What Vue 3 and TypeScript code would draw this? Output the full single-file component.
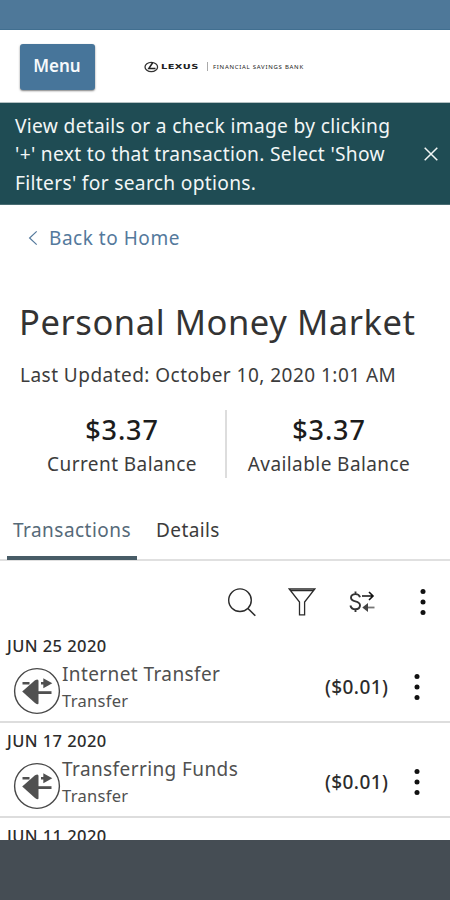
<script setup lang="ts">
interface Transaction {
  date: string
  title: string
  category: string
  amount: string
}

const transactions: Transaction[] = [
  { date: 'JUN 25 2020', title: 'Internet Transfer', category: 'Transfer', amount: '($0.01)' },
  { date: 'JUN 17 2020', title: 'Transferring Funds', category: 'Transfer', amount: '($0.01)' },
]

const balances = [
  { amount: '$3.37', label: 'Current Balance' },
  { amount: '$3.37', label: 'Available Balance' },
]
</script>

<template>
  <div class="screen">
    <div class="status-bar"></div>
    <header class="header">
      <button class="menu-btn">Menu</button>
      <div class="brand">
        <svg class="brand-mark" viewBox="0 0 15 12" width="15" height="12">
          <ellipse cx="7.3" cy="6" rx="6.3" ry="4.7" fill="none" stroke="#333" stroke-width="1.3" />
          <path d="M8.8 1.5 L4.8 7.6 H11.5" fill="none" stroke="#222" stroke-width="1.5" />
        </svg>
        <span class="brand-name">LEXUS</span>
        <span class="brand-rule"></span>
        <span class="brand-bank">FINANCIAL SAVINGS BANK</span>
      </div>
    </header>

    <section class="notice">
      <p class="notice-text">
        <span>View details or a check image by clicking</span><br />
        <span>'+' next to that transaction. Select 'Show</span><br />
        <span>Filters' for search options.</span>
      </p>
      <svg class="close" viewBox="0 0 16 16" width="16" height="16">
        <path d="M1.7 1.7 L14.3 14.3 M14.3 1.7 L1.7 14.3" stroke="#f2f6f6" stroke-width="1.5" />
      </svg>
    </section>

    <a class="back">
      <svg viewBox="0 0 10 16" width="10" height="16">
        <path d="M8.7 1.4 L1.6 8 L8.7 14.6" fill="none" stroke="#54799c" stroke-width="1.2" />
      </svg>
      <span>Back to Home</span>
    </a>

    <h1 class="title">Personal Money Market</h1>
    <p class="updated">Last Updated: October 10, 2020 1:01 AM</p>

    <section class="balances">
      <div v-for="b in balances" :key="b.label" class="balance">
        <span class="balance-amount">{{ b.amount }}</span>
        <span class="balance-label">{{ b.label }}</span>
      </div>
    </section>

    <nav class="tabs">
      <a class="tab active">Transactions</a>
      <a class="tab details">Details</a>
    </nav>

    <div class="toolbar">
      <svg class="tool search" viewBox="0 0 30 30" width="30" height="30">
        <circle cx="13" cy="13.2" r="11.3" fill="none" stroke="#2b2b2b" stroke-width="1.4" />
        <path d="M20.7 21.2 L28.3 28.7" stroke="#2b2b2b" stroke-width="1.6" />
      </svg>
      <svg class="tool filter" viewBox="0 0 28 28" width="28" height="28">
        <path d="M1.2 1 H26.8 L16.6 14 V26.8 H11.5 V14 Z M2 2.6 H26" fill="none" stroke="#2b2b2b" stroke-width="1.3" />
      </svg>
      <svg class="tool exchange" viewBox="0 0 26 22" width="26" height="22">
        <path d="M11 6.2 C10.3 3.8 8.8 3.1 6.6 3.1 C3.8 3.1 2 4.5 2 6.7 C2 11.7 11 8.9 11 14.3 C11 16.8 9.2 18.3 6.4 18.3 C3.7 18.3 2 17 1.4 14.5 M6.5 0.5 V3.2 M6.5 18.2 V21" fill="none" stroke="#333" stroke-width="1.9" />
        <path d="M13 5 H24 M20 1 L24 5 L20 9" fill="none" stroke="#111" stroke-width="1.6" />
        <path d="M16 16.5 H25.5" stroke="#777" stroke-width="1.8" />
        <path d="M13.3 16.5 L19 12 V21 Z" fill="#444" />
      </svg>
      <svg class="tool dots" viewBox="0 0 8 28" width="8" height="28">
        <circle v-for="y in [3.5, 14, 24.5]" :key="y" cx="4" :cy="y" r="2.5" fill="#111" />
      </svg>
    </div>

    <ul class="list">
      <li v-for="t in transactions" :key="t.date" class="row">
        <div class="date">{{ t.date }}</div>
        <div class="entry">
          <svg class="entry-icon" viewBox="0 0 48 48" width="48" height="48">
            <circle cx="24" cy="24" r="22.4" fill="#fff" stroke="#484848" stroke-width="1.4" />
            <path d="M9.5 16.2 H16.5 M28 16.2 H33" stroke="#505050" stroke-width="2.6" />
            <path d="M30.3 11.3 L39.3 16.2 L30.3 21.2 Z" fill="#505050" />
            <path d="M9.2 24.5 L22 13.3 Q25.5 11.2 25.5 14 V36 Q25.5 38.4 22 36 Z" fill="#505050" />
            <path d="M25 25.6 H38.5" stroke="#505050" stroke-width="2.8" />
          </svg>
          <div class="entry-text">
            <span class="entry-title">{{ t.title }}</span>
            <span class="entry-category">{{ t.category }}</span>
          </div>
          <span class="amount">{{ t.amount }}</span>
          <svg class="row-dots" viewBox="0 0 8 28" width="8" height="28">
            <circle v-for="y in [3.5, 14, 24.5]" :key="y" cx="4" :cy="y" r="2.5" fill="#111" />
          </svg>
        </div>
      </li>
      <li class="row">
        <div class="date">JUN 11 2020</div>
      </li>
    </ul>
    <footer class="bottom-bar"></footer>
  </div>
</template>

<style>
body {
  margin: 0;
  background: #fff;
}
</style>

<style scoped>
.screen {
  width: 450px;
  height: 900px;
  display: flex;
  flex-direction: column;
  overflow: hidden;
  background: #fff;
  color: #3c3c3c;
  font-family: 'Noto Sans', 'Open Sans', sans-serif;
}
.screen > * { flex-shrink: 0; box-sizing: border-box; }
p, h1, ul { margin: 0; padding: 0; }
span, a, .date { white-space: nowrap; }
.status-bar { height: 30px; background: #4e7899; border-bottom: 1px solid #416f90; }
.header { height: 73px; display: flex; align-items: center; padding-left: 20px; border-bottom: 1px solid #b4c1c3; }
.menu-btn {
  width: 75px;
  height: 46px;
  margin-top: 1px;
  padding: 0 1px 2px 0;
  border: 0;
  border-radius: 3px;
  background: #47759a;
  box-shadow: 0 1px 2px rgba(0, 0, 0, 0.5);
  color: #f6f9fc;
  font: 600 17px/24px 'Noto Sans', 'Open Sans', sans-serif;
}
.brand { display: flex; align-items: center; margin-left: 49px; height: 12px; margin-top: 1px; }
.brand-name { margin-left: 2px; width: 40px; font-family: 'DejaVu Sans', sans-serif; font-size: 7px; line-height: 12px; font-weight: 700; letter-spacing: 0.3px; color: #222; transform: scaleX(1.4); transform-origin: left center; }
.brand-rule { width: 1px; height: 9px; background: #aaa; margin-left: 6px; }
.brand-bank { margin-left: 5px; font-size: 6px; line-height: 12px; letter-spacing: 0.73px; color: #222; }
.notice { height: 102px; display: flex; align-items: center; justify-content: space-between; padding: 0 11px 0 15px; background: #1f4c54; border-bottom: 1px solid #486c72; }
.notice-text { padding-top: 2px; font-size: 19.2px; line-height: 28.3px; letter-spacing: 0.31px; color: #f2f6f6; }
.back { display: flex; align-items: center; gap: 11px; height: 66px; padding-left: 28px; color: #54799c; font-size: 19px; line-height: 26px; letter-spacing: 0.53px; }
.title { height: 88px; padding: 26px 0 0 19px; font-size: 34.5px; line-height: 50px; font-weight: 400; letter-spacing: 0.57px; white-space: nowrap; color: #333; }
.updated { height: 51px; padding: 3px 0 0 20px; font-size: 19px; line-height: 26px; letter-spacing: 0.47px; white-space: nowrap; }
.balances { display: grid; grid-template-columns: 225px 225px; height: 68px; }
.balance { display: flex; flex-direction: column; align-items: center; padding: 0 0 0 19px; }
.balance + .balance { border-left: 2px solid #ddd; padding: 0 19px 0 0; }
.balance-amount { font-size: 27px; line-height: 40px; font-weight: 500; letter-spacing: 0.9px; color: #1c1c1c; }
.balance-label { font-size: 19px; line-height: 28px; letter-spacing: 0.42px; }
.tabs { height: 83px; display: flex; align-items: flex-end; padding-left: 7px; border-bottom: 2px solid #e0e0e0; }
.tab { height: 44px; box-sizing: border-box; padding: 1px 6px 0; margin-bottom: -1px; font-size: 19px; line-height: 26px; letter-spacing: 0.4px; border-bottom: 4px solid transparent; }
.tab.active { width: 130px; color: #566a79; border-color: #485c67; letter-spacing: 0.46px; }
.tab.details { margin-left: 13px; }
.toolbar { height: 67px; display: flex; align-items: center; padding: 14px 0 0 227px; }
.filter { margin-left: 31px; }
.exchange { margin-left: 33px; }
.dots { margin-left: 44px; }
.toolbar .tool { flex-shrink: 0; }
.list { height: 212px; list-style: none; overflow: hidden; }
.row { height: 95px; box-sizing: border-box; border-bottom: 2px solid #ddd; }
.date { padding: 7px 0 0 7px; font-size: 16.5px; line-height: 22px; font-weight: 500; letter-spacing: 0.42px; color: #2c2c2c; }
.entry { display: flex; align-items: center; height: 60px; padding-left: 13px; }
.entry-icon { margin-top: 8px; flex-shrink: 0; }
.entry-text { display: flex; flex-direction: column; flex-shrink: 0; width: 239px; margin: 0 0 0 1px; color: #505050; }
.entry-title { font-size: 19px; line-height: 27px; letter-spacing: 0.4px; }
.entry-category { font-size: 16.5px; line-height: 25px; letter-spacing: 0.3px; }
.amount { width: 88px; margin-left: 24px; font-size: 19px; line-height: 26px; font-weight: 500; letter-spacing: 0.4px; color: #2c2c2c; }
.row-dots { flex-shrink: 0; }
.bottom-bar { height: 60px; background: #454d54; }
</style>
